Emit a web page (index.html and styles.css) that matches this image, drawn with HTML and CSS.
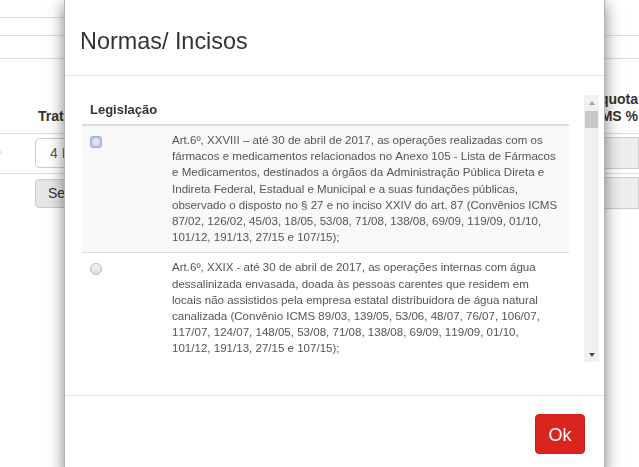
FILE: index.html
```html
<!DOCTYPE html>
<html lang="pt-BR">
<head>
  <meta charset="UTF-8">
  <title>Produto · Tributação</title>
  <link rel="stylesheet" href="styles.css">
</head>
<body>
  <div class="page">
    <div class="bar bar-top"></div>
    <div class="bar bar-mid"></div>
    <div class="bar bar-low"></div>

    <table class="grid">
      <thead>
        <tr>
          <th class="c-prod"></th>
          <th class="c-trat">Tratamento</th>
          <th class="c-gap"></th>
          <th class="c-aliq">Alíquota<br>ICMS %</th>
        </tr>
      </thead>
      <tbody>
        <tr>
          <td class="c-prod"><span class="chev">›</span></td>
          <td class="c-trat"><div class="field">4 Isento</div></td>
          <td class="c-gap"></td>
          <td class="c-aliq"><div class="field ro"></div></td>
        </tr>
        <tr>
          <td class="c-prod"></td>
          <td class="c-trat"><button class="btn-sel">Selecionar</button></td>
          <td class="c-gap"></td>
          <td class="c-aliq"><div class="field ro"></div></td>
        </tr>
      </tbody>
    </table>
  </div>

  <div class="modal">
    <div class="modal-content">
      <div class="modal-header">
        <h4>Normas/ Incisos</h4>
      </div>
      <div class="modal-body">
        <div class="legis-box">
          <div class="legis-scroll">
            <table class="legis">
              <thead>
                <tr><th colspan="2">Legislação</th></tr>
              </thead>
              <tbody id="legisRows">
                <tr>
                  <td class="pick"><input type="radio" name="norma" class="radio focus" checked></td>
                  <td class="txt">Art.6º, XXVIII – até 30 de abril de 2017, as operações realizadas com os fármacos e medicamentos relacionados no Anexo 105 - Lista de Fármacos e Medicamentos, destinados a órgãos da Administração Pública Direta e Indireta Federal, Estadual e Municipal e a suas fundações públicas, observado o disposto no § 27 e no inciso XXIV do art. 87 (Convênios ICMS 87/02, 126/02, 45/03, 18/05, 53/08, 71/08, 138/08, 69/09, 119/09, 01/10, 101/12, 191/13, 27/15 e 107/15);</td>
                </tr>
                <tr>
                  <td class="pick"><input type="radio" name="norma" class="radio"></td>
                  <td class="txt">Art.6º, XXIX - até 30 de abril de 2017, as operações internas com água dessalinizada envasada, doada às pessoas carentes que residem em locais não assistidos pela empresa estatal distribuidora de água natural canalizada (Convênio ICMS 89/03, 139/05, 53/06, 48/07, 76/07, 106/07, 117/07, 124/07, 148/05, 53/08, 71/08, 138/08, 69/09, 119/09, 01/10, 101/12, 191/13, 27/15 e 107/15);</td>
                </tr>
              </tbody>
            </table>
          </div>
          <div class="vbar">
            <span class="vbar-btn up"></span>
            <div class="vbar-track"><div class="vbar-thumb"></div></div>
            <span class="vbar-btn down"></span>
          </div>
        </div>
      </div>
      <div class="modal-footer">
        <button type="button" class="btn-ok">Ok</button>
      </div>
    </div>
  </div>

<script src="script.js"></script>
</body>
</html>
```

FILE: styles.css
```css
*{box-sizing:border-box;}
body{margin:0;font-family:"Liberation Sans",Arial,Helvetica,sans-serif;font-size:13px;color:#333;background:#fff;}

/* background page */
.page{width:639px;}
.bar{border-bottom:1px solid #ddd;}
.bar-top{height:18px;width:300px;}
.bar-mid{height:18px;}
.bar-low{height:23px;}
.grid{width:639px;border-collapse:collapse;margin-top:32px;}
.grid th{font-size:14px;font-weight:bold;line-height:17px;text-align:left;vertical-align:bottom;padding:0 0 8px 8px;}
.grid th.c-aliq{text-align:right;padding-right:1px;}
.grid td{border-top:1px solid #ddd;padding:3px 0 4px;}
.c-prod{width:30px;}
.c-trat{width:150px;}
.c-aliq{width:60px;}
.grid td.c-trat{padding-left:5px;}
.chev{display:block;color:#ccc;font-size:14px;line-height:14px;margin:-4px 0 0 -3px;}
.field{height:30px;border:1px solid #ccc;border-radius:4px;padding:5px 14px;font-size:14px;line-height:18px;color:#555;}
.field.ro{background:#eee;border-radius:0;height:32px;}
.btn-sel{height:29px;padding:4px 12px;font:14px "Liberation Sans",Arial,sans-serif;color:#333;background:#e6e6e6;border:1px solid #ccc;border-radius:4px;}

/* modal */
.modal{position:fixed;top:-1px;left:64px;width:541px;}
.modal-content{background:#fff;border:1px solid rgba(0,0,0,.3);box-shadow:0 5px 15px rgba(0,0,0,.5);}
.modal-header{padding:28px 15px 21px 15px;border-bottom:1px solid #e5e5e5;}
.modal-header h4{margin:0;font-size:23.4px;line-height:26px;font-weight:normal;color:#333;}
.modal-body{padding:19px 5px 33px 15px;}
.modal-footer{border-top:1px solid #e5e5e5;padding:18px 19px 18px;text-align:right;}

.legis-box{display:flex;height:267px;}
.legis-scroll{flex:1;overflow-y:auto;scrollbar-width:none;}
.legis-scroll::-webkit-scrollbar{display:none;}
.vbar{width:15px;display:flex;flex-direction:column;background:#f1f1f1;}
.vbar-btn{height:15px;display:flex;align-items:center;justify-content:center;}
.vbar-btn::before{content:"";border-left:3.5px solid transparent;border-right:3.5px solid transparent;}
.vbar-btn.up::before{border-bottom:4px solid #a3a3a3;}
.vbar-btn.down::before{border-top:4px solid #505050;}
.vbar-track{flex:1;padding:1px 1px 0 1px;}
.vbar-thumb{height:17px;background:#c8c8c8;}

.legis{width:487px;margin-left:2px;border-collapse:collapse;}
.legis th{text-align:left;font-size:13px;font-weight:bold;color:#333;padding:7px 8px 6px;line-height:16px;border-bottom:2px solid #ddd;}
.legis td{vertical-align:top;border-top:1px solid #ddd;padding:6px 8px 7px;}
.legis tbody tr:nth-child(odd){background:#f9f9f9;}
.legis tbody tr:first-child td{border-top:0;}
.pick{width:82px;}
.legis td.txt{font-size:11.55px;line-height:16.2px;color:#555;padding-right:9px;font-kerning:none;}

.radio{appearance:none;-webkit-appearance:none;width:12px;height:12px;margin:4px 0 0;border:1px solid #b5b5b5;border-radius:50%;background:linear-gradient(#f6f6f6,#dcdcdc);}
.radio.focus{border:1px solid #9fb0d6;border-radius:3px;background:radial-gradient(circle,#dfe3ec 3px,#b9c5e2 4.5px);}

.btn-ok{width:50px;height:40px;padding:9px 0;font:18px/22px "Liberation Sans",Arial,sans-serif;color:#fff;background:#d9251d;border:1px solid #c9211a;border-radius:4px;cursor:pointer;}
```

FILE: script.js
```js
// remaining incisos loaded in the list (only the first two are visible at once)
const ROMANS = ['XXX','XXXI','XXXII','XXXIII','XXXIV','XXXV','XXXVI','XXXVII','XXXVIII','XXXIX','XL','XLI','XLII','XLIII','XLIV','XLV','XLVI','XLVII','XLVIII','XLIX','L','LI','LII','LIII','LIV','LV','LVI','LVII'];
const PHRASES = [
  'as operações com equipamentos e insumos destinados à prestação de serviços de saúde, relacionados no Anexo 106, observadas as condições estabelecidas (Convênios ICMS 01/99, 05/99, 55/99, 26/03, 53/08, 71/08, 138/08, 69/09, 01/10, 101/12, 191/13, 27/15 e 107/15);',
  'as saídas internas de leite pasteurizado tipo especial, com teor de gordura igual ou superior a 3%, destinadas a programas sociais de distribuição gratuita mantidos pelo Poder Público (Convênios ICMS 53/08, 71/08, 138/08, 69/09, 119/09, 01/10 e 107/15);',
  'as operações com medicamentos destinados ao tratamento de portadores do vírus da imunodeficiência humana, observado o disposto no Anexo 107 (Convênios ICMS 10/02, 45/03, 53/08, 71/08, 138/08, 69/09, 119/09, 01/10, 101/12, 191/13, 27/15 e 107/15);',
  'as operações internas com produtos hortifrutigranjeiros em estado natural, destinados ao consumo de entidades assistenciais sem fins lucrativos (Convênios ICMS 44/75, 53/08, 71/08, 138/08, 69/09, 01/10, 101/12 e 107/15);'
];

const tbody = document.getElementById('legisRows');

ROMANS.forEach((num, i) => {
  const tr = document.createElement('tr');
  tr.innerHTML =
    '<td class="pick"><input type="radio" name="norma" class="radio"></td>' +
    `<td class="txt">Art.6º, ${num} - até 30 de abril de 2017, ${PHRASES[i % PHRASES.length]}</td>`;
  tbody.appendChild(tr);
});
```
